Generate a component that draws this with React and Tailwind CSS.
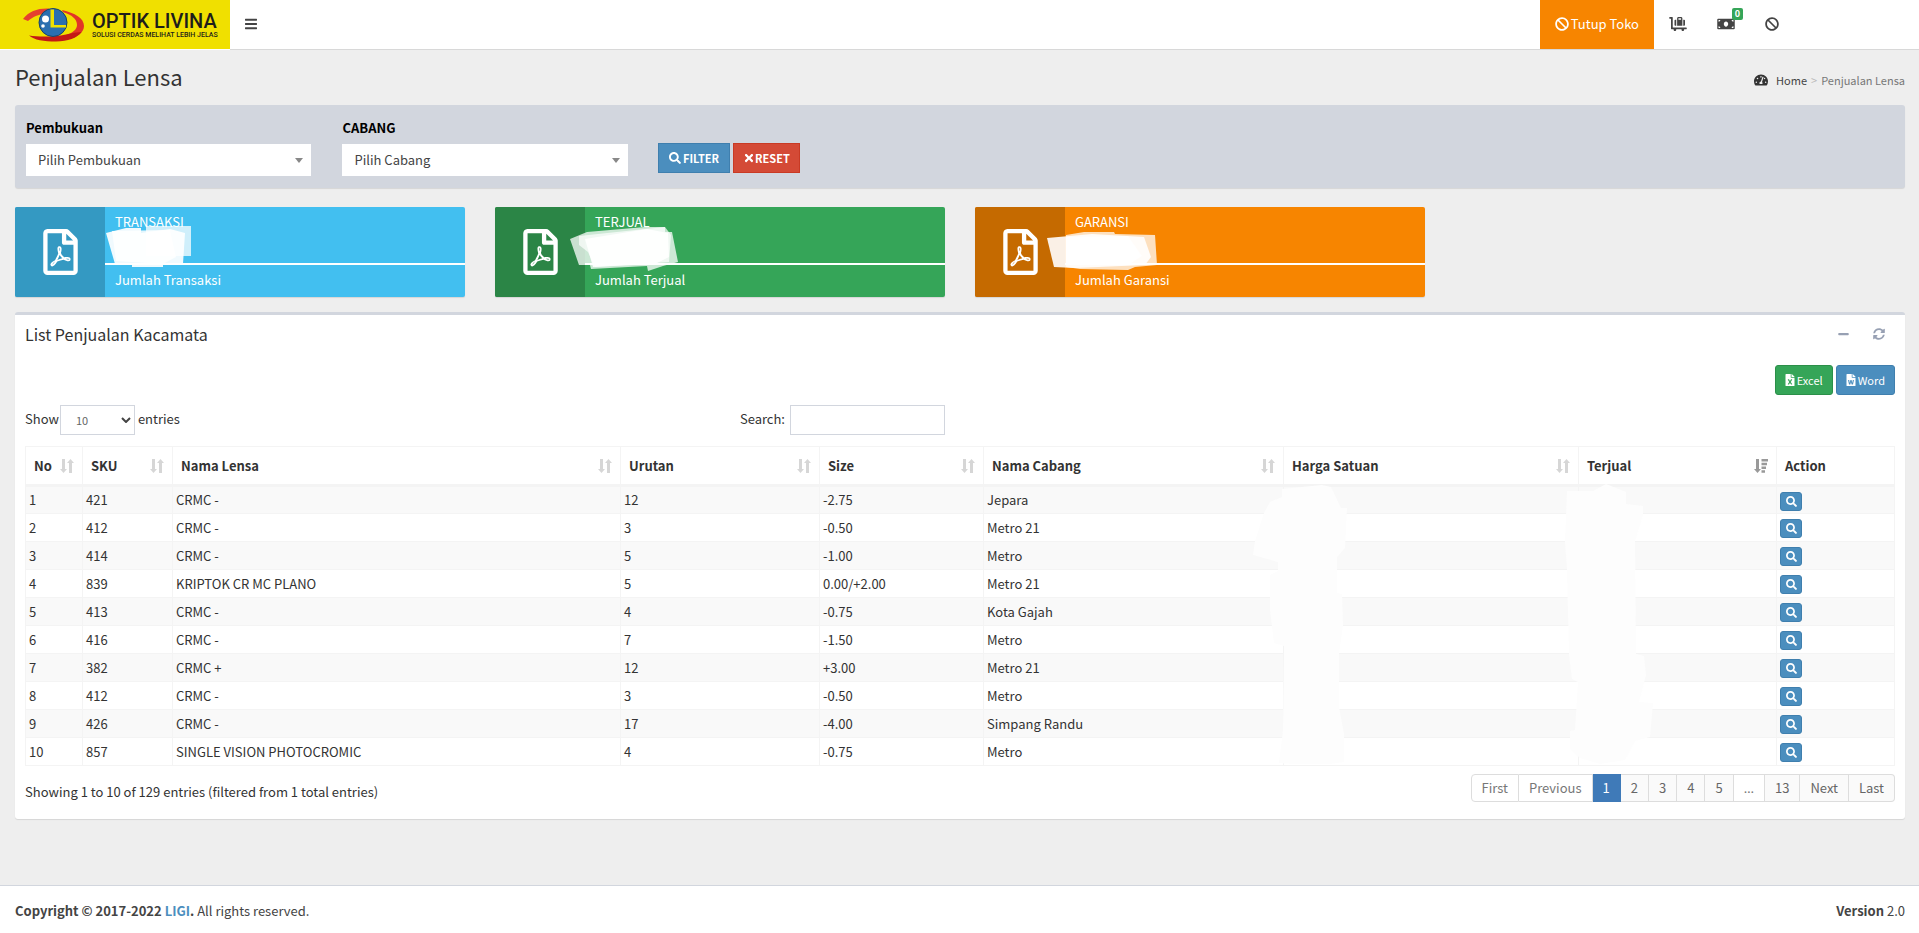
import React from "react";
import {
  FaBars, FaBan, FaLuggageCart, FaMoneyBill, FaTachometerAlt, FaSearch, FaTimes,
  FaRegFilePdf, FaMinus, FaFileExcel, FaFileWord, FaSyncAlt,
} from "react-icons/fa";

const ROWS = [
  [1, 421, "CRMC -", 12, "-2.75", "Jepara"],
  [2, 412, "CRMC -", 3, "-0.50", "Metro 21"],
  [3, 414, "CRMC -", 5, "-1.00", "Metro"],
  [4, 839, "KRIPTOK CR MC PLANO", 5, "0.00/+2.00", "Metro 21"],
  [5, 413, "CRMC -", 4, "-0.75", "Kota Gajah"],
  [6, 416, "CRMC -", 7, "-1.50", "Metro"],
  [7, 382, "CRMC +", 12, "+3.00", "Metro 21"],
  [8, 412, "CRMC -", 3, "-0.50", "Metro"],
  [9, 426, "CRMC -", 17, "-4.00", "Simpang Randu"],
  [10, 857, "SINGLE VISION PHOTOCROMIC", 4, "-0.75", "Metro"],
];

const COLUMNS = ["No", "SKU", "Nama Lensa", "Urutan", "Size", "Nama Cabang", "Harga Satuan", "Terjual", "Action"];

const CARDS = [
  {
    title: "TRANSAKSI", text: "Jumlah Transaksi", bg: "bg-[#42bff0]", dark: "bg-[#3499c2]",
    patches: [
      ["131,19 176,19 176,49 131,49", 0.75],
      ["91,26 111,21 126,21 126,26 155,22 170,26 168,57 148,57 148,60 117,60 117,57 100,57", 0.92],
      ["97,24 155,23 161,50 148,57 101,54", 0.85],
    ],
  },
  {
    title: "TERJUAL", text: "Jumlah Terjual", bg: "bg-[#35a558]", dark: "bg-[#2b8546]",
    patches: [
      ["75,32 92,25 150,20 170,20 170,25 177,25 183,55 168,59 153,64 152,59 96,62 95,58 84,58", 0.75],
      ["84,29 150,22 170,20 176,28 174,55 100,60 93,45 84,38", 0.7],
      ["90,32 152,22 173,26 174,50 160,57 98,60", 0.9],
    ],
  },
  {
    title: "GARANSI", text: "Jumlah Garansi", bg: "bg-[#f78500]", dark: "bg-[#c56a00]",
    patches: [
      ["91,28 109,25 139,25 140,27 180,28 182,58 160,60 153,63 105,62 91,60", 0.75],
      ["72,31 117,27 169,30 176,50 170,58 100,61 79,60", 0.9],
      ["91,30 153,29 167,49 153,58 91,58", 0.9],
    ],
  },
];

const PAGES = ["First", "Previous", "1", "2", "3", "4", "5", "…", "13", "Next", "Last"];

function LogoMark() {
  return (
    <svg viewBox="0 0 64 36" className="h-9 w-16 shrink-0" aria-hidden="true">
      <path d="M1 12 C7 4 16 1 27 1.500 L24 7 C16 7 11 10 6 14 Z" fill="#e5402f" />
      <path d="M40 3 C53 6 62 11 62 19 C62 25 56 30 47 32 L44 28 C51 26 55 22 55 18 C55 12 50 8 41 5 Z" fill="#e23527" />
      <path d="M7 28.500 C17 30 32 30 44 27.500 C50 26 56 25 59.500 25 C55 31 46 34.500 34 34.500 C22 34.500 12 33 7 28.500 Z" fill="#c41a15" />
      <circle cx="31" cy="15.500" r="14" fill="#2a6faf" stroke="#1b4168" strokeWidth="1" />
      <path d="M28.500 2.500 H32 V18 H44 V20.500 H28.500 Z" fill="#efe000" />
      <circle cx="23.500" cy="12" r="3.500" fill="#fff" />
      <circle cx="21" cy="19" r="1.800" fill="#fff" />
    </svg>
  );
}

function SortIcon({ active }) {
  return (
    <svg viewBox="0 0 14 14" className={active ? "h-3.5 w-3.5 fill-[#999999]" : "h-3.5 w-3.5 fill-[#d6d6d6]"} aria-hidden="true">
      <path d="M2 0 H5 V10 H7 L3.500 14 L0 10 H2 Z" />
      {active ? (
        <path d="M7.500 0 H14 V2.500 H7.500 Z M7.500 3.800 H13 V6.300 H7.500 Z M7.500 7.500 H12 V10 H7.500 Z M7.500 11.300 H11 V13.800 H7.500 Z" />
      ) : (
        <path d="M9 14 V4 H7 L10.500 0 L14 4 H12 V14 Z" />
      )}
    </svg>
  );
}

function FilterSelect({ id, label, placeholder }) {
  return (
    <div className="w-1/6 px-[15px]">
      <label htmlFor={id} className="block text-[13px] leading-5 font-bold text-black">{label}</label>
      <div className="relative mt-1.5 mr-px">
        <select id={id} className="block h-8 w-full appearance-none rounded-none bg-white pl-3 text-[13px] text-[#444]">
          <option>{placeholder}</option>
        </select>
        <span className="pointer-events-none absolute top-3.5 right-2 border-x-4 border-t-5 border-x-transparent border-t-[#888]" />
      </div>
    </div>
  );
}

function InfoCard({ title, text, bg, dark, patches }) {
  return (
    <div className="w-1/4 px-[15px]">
      <div className={`relative flex h-[90px] rounded-xs text-white shadow-[0_1px_1px_rgba(0,0,0,0.1)] ${bg}`}>
        <div className={`flex w-[90px] items-center justify-center rounded-l-xs ${dark}`}>
          <FaRegFilePdf className="h-[46px] w-[35px]" />
        </div>
        <div className="flex flex-1 flex-col">
          <div className="h-14 px-2.5 pt-[5px] text-[13px] leading-5">{title}</div>
          <div className="h-0.5 bg-white" />
          <div className="px-2.5 pt-[5px] text-[13px] leading-5">{text}</div>
        </div>
        <svg viewBox="0 0 450 90" className="pointer-events-none absolute top-0 left-0 h-[90px] w-[450px]" aria-hidden="true">
          {patches.map(([points, opacity]) => (
            <polygon key={points} points={points} fill="#fff" fillOpacity={opacity} />
          ))}
        </svg>
      </div>
    </div>
  );
}

function pageClass(page) {
  const base = "flex h-7 items-center border-y border-r px-2.5 text-[13px] leading-5 first:rounded-l first:border-l last:rounded-r";
  if (page === "1") return `${base} border-[#3f7ab8] bg-[#3f7ab8] text-white`;
  if (page === "…") return `${base} border-[#ddd] bg-white font-['Noto_Sans',sans-serif] text-[#777]`;
  if (page === "First" || page === "Previous") return `${base} border-[#ddd] bg-white text-[#777]`;
  return `${base} border-[#ddd] bg-[#fafafa] text-[#666]`;
}

export default function App() {
  return (
    <div className="flex min-h-screen flex-col bg-[#eeeeee] font-['Noto_Sans_CJK_SC','Noto_Sans',sans-serif] text-[13px] leading-5 text-[#333]">
      <header className="flex h-[50px] bg-white">
        <a href="#" className="mb-px flex w-[230px] shrink-0 items-center bg-[#f0e000] pl-[22px] text-[#1d1d1b]">
          <LogoMark />
          <span className="ml-1.5 flex flex-col whitespace-nowrap font-['Roboto',sans-serif]">
            <span className="text-[20px] leading-5 font-medium">OPTIK LIVINA</span>
            <span className="text-[7px] leading-2 font-medium">SOLUSI CERDAS MELIHAT LEBIH JELAS</span>
          </span>
        </a>
        <div className="flex flex-1 items-stretch border-b border-[#d8d8d8]">
          <button aria-label="Menu" className="px-[15px] pb-0.5 text-[#444]"><FaBars className="h-3.5 w-3" /></button>
          <nav className="mr-[125px] ml-auto flex items-stretch text-[#444]">
            <button className="flex items-center gap-0.5 bg-[#f78500] px-[15px] pb-0.5 text-white">
              <FaBan className="size-3.5" />Tutup Toko
            </button>
            <button aria-label="Keranjang" className="px-[15px] pb-0.5"><FaLuggageCart className="h-3.5 w-[18px]" /></button>
            <button aria-label="Kas" className="relative px-[15px] pb-0.5">
              <FaMoneyBill className="h-3.5 w-[18px]" />
              <span className="absolute top-2 right-[7px] rounded-xs bg-[#35a558] px-[3px] text-[9px] leading-3 font-bold text-white">0</span>
            </button>
            <button aria-label="Blokir" className="px-[15px] pb-0.5"><FaBan className="size-3.5" /></button>
          </nav>
        </div>
      </header>

      <main className="flex-1 pr-[14px] pl-[15px]">
        <div className="flex items-center justify-between pt-3">
          <h1 className="text-[22px] leading-6">Penjualan Lensa</h1>
          <nav className="flex items-center pt-2 text-[11px] leading-5">
            <FaTachometerAlt className="mr-2 size-3.5" />
            <a href="#" className="text-[#444]">Home</a>
            <span className="mx-1 text-[#bbb]">&gt;</span>
            <span className="text-[#777]">Penjualan Lensa</span>
          </nav>
        </div>

        <section className="mt-[15px] rounded-[3px] bg-[#d2d6de] px-[10px] pt-[13px] pb-3 shadow-[0_1px_1px_rgba(0,0,0,0.1)]">
          <div className="-mr-[15px] -ml-[14px] flex">
            <FilterSelect id="pembukuan" label="Pembukuan" placeholder="Pilih Pembukuan" />
            <FilterSelect id="cabang" label="CABANG" placeholder="Pilih Cabang" />
            <div className="flex items-start gap-[3px] px-[14px] pt-[25px] text-[11px] font-bold text-white">
              <button className="flex h-[30px] items-center gap-0.5 border border-[#3f7fae] bg-[#4b8ebe] px-2.5">
                <FaSearch className="size-3" />FILTER
              </button>
              <button className="flex h-[30px] items-center border border-[#c93a24] bg-[#d44a36] px-[9px]">
                <FaTimes className="size-3" />RESET
              </button>
            </div>
          </div>
        </section>

        <section className="-mx-[15px] mt-[19px] flex">
          {CARDS.map((card) => <InfoCard key={card.title} {...card} />)}
        </section>

        <section className="mt-[15px] rounded-[3px] border-t-3 border-[#d2d6de] bg-white px-2.5 shadow-[0_1px_1px_rgba(0,0,0,0.1)]">
          <div className="flex h-[38px] items-center justify-between">
            <h2 className="text-[16px] leading-5">List Penjualan Kacamata</h2>
            <div className="flex gap-6 pr-2.5 text-[#97a0b3]">
              <button aria-label="Ciutkan"><FaMinus className="h-3 w-[11px]" /></button>
              <button aria-label="Muat ulang"><FaSyncAlt className="size-3" /></button>
            </div>
          </div>
          <div className="mt-3 flex justify-end gap-[3px] text-[11px] text-white">
            <button className="flex h-[30px] items-center gap-0.5 rounded-[3px] border border-[#2b8f49] bg-[#35a558] px-[9px]">
              <FaFileExcel className="h-3 w-2.5" />Excel
            </button>
            <button className="flex h-[30px] items-center gap-0.5 rounded-[3px] border border-[#3f7fae] bg-[#4b8ebe] px-[9px]">
              <FaFileWord className="h-3 w-2.5" />Word
            </button>
          </div>

          <div className="mt-2.5 flex w-1/2 items-start justify-between">
            <div className="flex items-start">
              <label htmlFor="length" className="pt-1">Show</label>
              <span className="relative mr-[3px] ml-px">
                <select id="length" className="block h-[30px] w-[75px] appearance-none rounded-none border border-[#d2d6de] bg-white pl-[15px] text-[11px] text-[#666]">
                  <option>10</option>
                </select>
                <svg viewBox="0 0 10 6" className="pointer-events-none absolute top-3 right-1 h-1.5 w-2.5" aria-hidden="true">
                  <path d="M1 1 L5 5 L9 1" fill="none" stroke="#444" strokeWidth="2" />
                </svg>
              </span>
              <span className="pt-1">entries</span>
            </div>
            <div className="flex items-start gap-[5px] pr-[15px]">
              <label htmlFor="search" className="pt-1">Search:</label>
              <input id="search" type="search" className="h-[30px] w-[155px] border border-[#d2d6de] bg-white px-2.5" />
            </div>
          </div>

          <div className="relative mt-[11px]">
            <table className="w-full table-fixed border-collapse text-left">
              <colgroup>
                <col className="w-[57px]" />
                <col className="w-[90px]" />
                <col className="w-[24%]" />
                <col className="w-[199px]" />
                <col className="w-[164px]" />
                <col className="w-[300px]" />
                <col className="w-[295px]" />
                <col className="w-[198px]" />
                <col className="w-[118px]" />
              </colgroup>
              <thead>
                <tr>
                  {COLUMNS.map((name) => (
                    <th key={name} className="h-[39px] border border-b-3 border-[#f4f4f4] px-2 font-bold">
                      <span className="flex items-center justify-between">
                        {name}
                        {name !== "Action" && <SortIcon active={name === "Terjual"} />}
                      </span>
                    </th>
                  ))}
                </tr>
              </thead>
              <tbody>
                {ROWS.map((row) => (
                  <tr key={row[0]} className="h-7 odd:bg-[#f9f9f9]">
                    {row.map((value, i) => (
                      <td key={i} className="border border-[#f4f4f4] px-[3px]">{value}</td>
                    ))}
                    <td className="border border-[#f4f4f4]" />
                    <td className="border border-[#f4f4f4]" />
                    <td className="border border-[#f4f4f4] px-[3px] pt-0.5">
                      <button aria-label={`Detail ${row[0]}`} className="flex h-[19px] w-[22px] items-center justify-center rounded-[3px] border border-[#3f7fae] bg-[#4b8ebe] text-white">
                        <FaSearch className="size-[11px]" />
                      </button>
                    </td>
                  </tr>
                ))}
              </tbody>
            </table>
            <svg viewBox="0 0 500 350" className="pointer-events-none absolute -top-4 right-[165px] h-[350px] w-[500px]" fill="#fdfdfd" aria-hidden="true">
              <path d="M52 59 L92 55 L101 57 L111 78 L117 78 L115 118 L107 127 V163 L112 164 L113 195 L109 224 V277 L114 304 V332 L100 334 L64 334 L49 333 L53 300 L54 216 L44 213 L40 180 V145 L48 141 V132 L23 125 L25 111 L34 83 L40 72 L52 67 Z" />
              <path d="M337 61 L363 61 L376 54 L396 62 V74 L413 76 V85 L405 111 L406 224 L414 226 L416 245 L409 272 L423 273 L420 307 L405 311 L395 330 L370 334 L350 328 L340 319 V301 L345 300 L348 252 L342 249 L339 225 L337 139 L335 112 Z" />
            </svg>
          </div>

          <div className="flex justify-between pt-2 pb-[17px]">
            <p className="pt-2">Showing 1 to 10 of 129 entries (filtered from 1 total entries)</p>
            <nav aria-label="Halaman" className="flex">
              {PAGES.map((page) => (
                <a key={page} href="#" className={pageClass(page)}>{page}</a>
              ))}
            </nav>
          </div>
        </section>
      </main>

      <footer className="flex justify-between border-t border-[#d2d6de] bg-white pt-[15px] pr-[14px] pb-3 pl-[15px] text-[#444]">
        <p><strong>Copyright © 2017-2022 <a href="#" className="text-[#4b8ebe]">LIGI</a>.</strong> All rights reserved.</p>
        <p><strong>Version</strong> 2.0</p>
      </footer>
    </div>
  );
}
